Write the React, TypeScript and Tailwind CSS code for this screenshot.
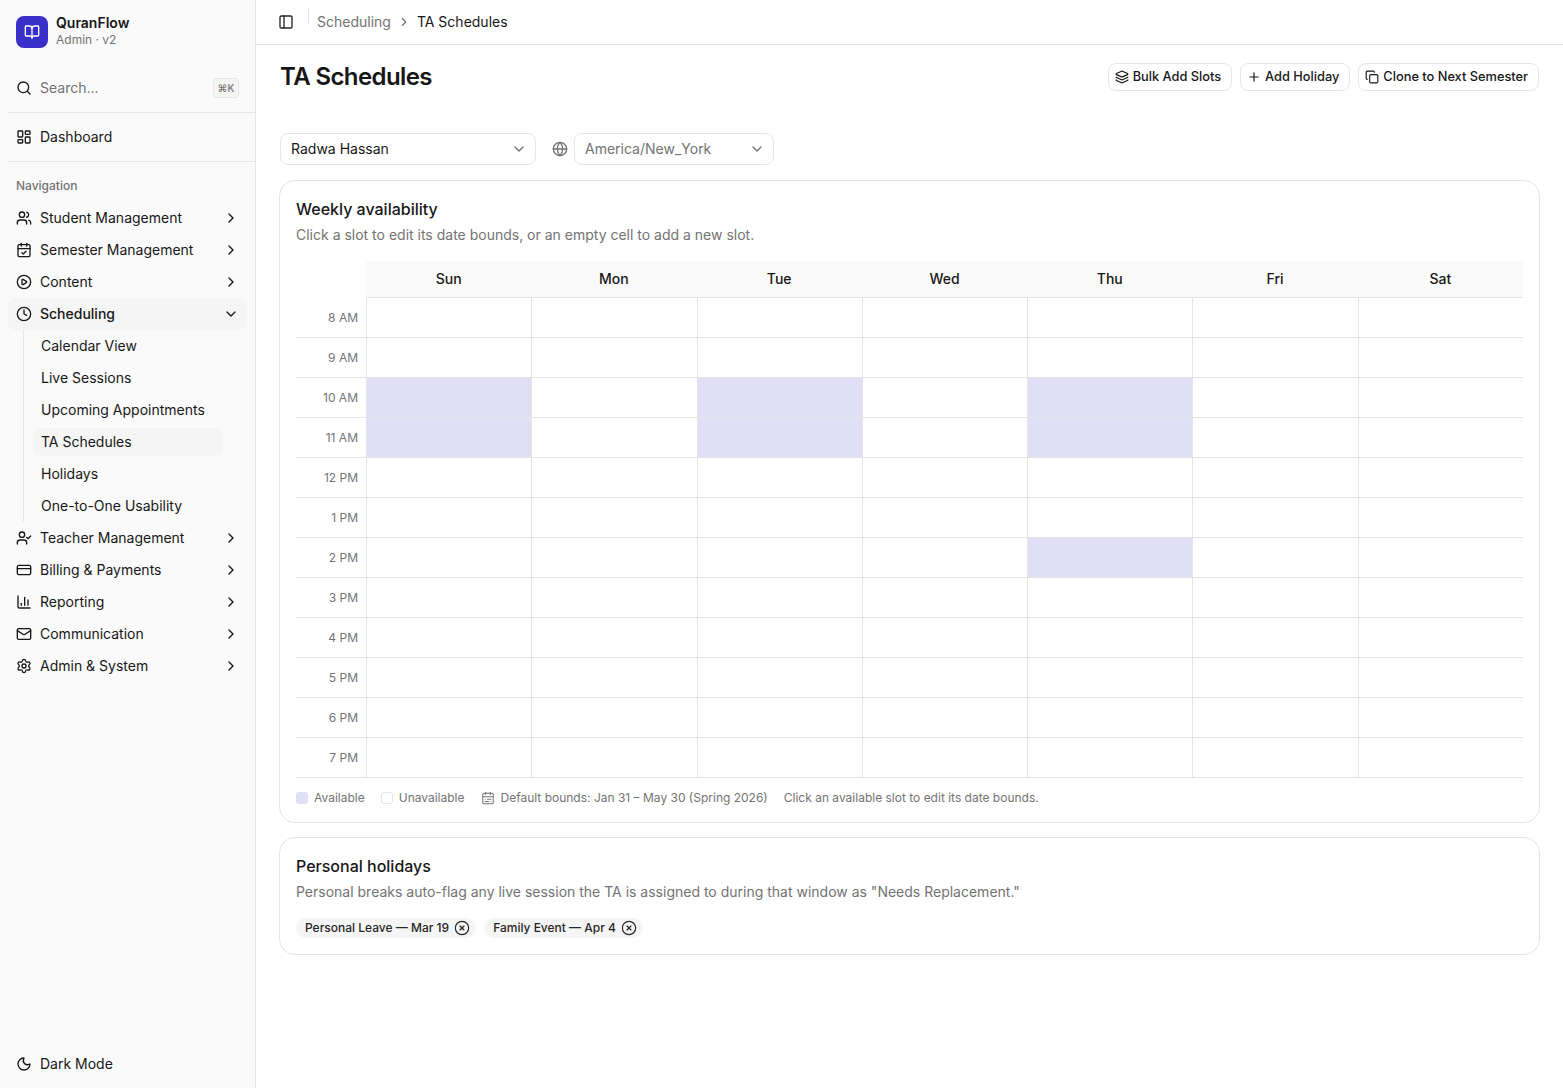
import React from 'react';
import {
  BookOpen,
  Search,
  LayoutDashboard,
  Users,
  CalendarCheck,
  CirclePlay,
  Clock,
  UserCheck,
  CreditCard,
  ChartColumn,
  Mail,
  Settings,
  Moon,
  PanelLeft,
  ChevronRight,
  ChevronDown,
  Layers,
  Plus,
  Copy,
  Globe,
  CalendarRange,
  CircleX,
} from 'lucide-react';

const DAYS = ['Sun', 'Mon', 'Tue', 'Wed', 'Thu', 'Fri', 'Sat'];
const HOURS = ['8 AM', '9 AM', '10 AM', '11 AM', '12 PM', '1 PM', '2 PM', '3 PM', '4 PM', '5 PM', '6 PM', '7 PM'];

// "day-hour" keys for the filled cells
const AVAILABLE = new Set(['0-2', '0-3', '2-2', '2-3', '4-2', '4-3', '4-6']);

const TOP_ITEMS = [
  { label: 'Student Management', icon: Users },
  { label: 'Semester Management', icon: CalendarCheck },
  { label: 'Content', icon: CirclePlay },
];

const BOTTOM_ITEMS = [
  { label: 'Teacher Management', icon: UserCheck },
  { label: 'Billing & Payments', icon: CreditCard },
  { label: 'Reporting', icon: ChartColumn },
  { label: 'Communication', icon: Mail },
  { label: 'Admin & System', icon: Settings },
];

const SCHEDULING_LINKS = ['Calendar View', 'Live Sessions', 'Upcoming Appointments', 'TA Schedules', 'Holidays', 'One-to-One Usability'];

const NavItem: React.FC<{ label: string; icon: React.ElementType }> = ({ label, icon: Icon }) => (
  <div className="flex h-8 items-center gap-2 px-2 text-[14px] leading-[20px] text-[#171717]">
    <Icon className="h-4 w-4 shrink-0" strokeWidth={2} />
    <span className="flex-1">{label}</span>
    <ChevronRight className="h-4 w-4 shrink-0" strokeWidth={2} />
  </div>
);

const Sidebar: React.FC = () => (
  <aside className="flex h-[1088px] w-[256px] shrink-0 flex-col border-r border-[#e5e5e5] bg-[#fafafa]">
    <div className="flex items-center gap-2 p-4">
      <div className="flex h-8 w-8 items-center justify-center rounded-lg bg-[#3b2fc9]">
        <BookOpen className="h-4 w-4 text-white" strokeWidth={2} />
      </div>
      <div className="flex flex-col">
        <span className="text-[14px] leading-[14px] font-semibold text-[#171717]">QuranFlow</span>
        <span className="mt-[2px] text-[12px] leading-[16px] text-[#737373]">Admin · v2</span>
      </div>
    </div>

    <div className="ml-2 flex h-[49px] items-center gap-2 border-b border-[#e5e5e5] pr-[16px] pl-2">
      <Search className="h-4 w-4 shrink-0 text-[#171717]" strokeWidth={2} />
      <span className="flex-1 text-[14px] leading-[20px] text-[#737373]">Search...</span>
      <span className="flex h-5 w-[26px] items-center justify-center rounded border border-[#e5e5e5] bg-[#f5f5f5] text-[10px] font-medium text-[#737373]">⌘K</span>
    </div>

    <div className="ml-2 flex h-[49px] items-center gap-2 border-b border-[#e5e5e5] pl-2 text-[14px] leading-[20px] text-[#171717]">
      <LayoutDashboard className="h-4 w-4" strokeWidth={2} />
      <span>Dashboard</span>
    </div>

    <div className="flex flex-1 flex-col p-2">
      <div className="flex h-8 items-center px-2 text-[12px] leading-[16px] font-medium text-[#737373]">Navigation</div>
      {TOP_ITEMS.map(item => (
        <NavItem key={item.label} {...item} />
      ))}
      <div className="flex h-8 items-center gap-2 rounded-lg bg-[#f5f5f5] px-2 text-[14px] leading-[20px] font-medium text-[#171717]">
        <Clock className="h-4 w-4 shrink-0" strokeWidth={2} />
        <span className="flex-1">Scheduling</span>
        <ChevronDown className="h-4 w-4 shrink-0" strokeWidth={2} />
      </div>
      <div className="mr-6 ml-[15px] flex flex-col gap-1 border-l border-[#e5e5e5] py-0.5 pl-[9px]">
        {SCHEDULING_LINKS.map(link => (
          <div
            key={link}
            className={`flex h-7 items-center rounded-md px-2 text-[14px] leading-[20px] text-[#171717] ${link === 'TA Schedules' ? 'bg-[#f5f5f5]' : ''}`}
          >
            {link}
          </div>
        ))}
      </div>
      {BOTTOM_ITEMS.map(item => (
        <NavItem key={item.label} {...item} />
      ))}
      <div className="mt-auto flex h-8 items-center gap-2 px-2 text-[14px] leading-[20px] text-[#171717]">
        <Moon className="h-4 w-4" strokeWidth={2} />
        <span>Dark Mode</span>
      </div>
    </div>
  </aside>
);

const ActionButton: React.FC<{ label: string; icon: React.ElementType }> = ({ label, icon: Icon }) => (
  <button className="flex h-7 items-center gap-1 rounded-lg border border-[#e5e5e5] bg-white pr-[10px] pl-[6px] text-[12.8px] font-medium text-[#171717]">
    <Icon className="h-[14px] w-[14px]" strokeWidth={2} />
    {label}
  </button>
);

const AvailabilityGrid: React.FC = () => (
  <div className="mt-4 grid grid-cols-[70px_repeat(7,1fr)]">
    <div className="h-[37px]" />
    {DAYS.map(day => (
      <div key={day} className="flex h-[37px] items-center justify-center border-b border-[#e5e5e5] bg-[#fafafa] text-[14px] leading-[20px] font-medium text-[#171717]">
        {day}
      </div>
    ))}
    {HOURS.map((hour, h) => (
      <React.Fragment key={hour}>
        <div className="flex h-10 items-center justify-end border-b border-[#e5e5e5] pr-2 text-[12px] text-[#737373]">{hour}</div>
        {DAYS.map((day, d) => (
          <div
            key={day}
            className={`h-10 border-b border-l border-[#e5e5e5] ${AVAILABLE.has(`${d}-${h}`) ? 'bg-[#e0dff6]' : 'bg-white'}`}
          />
        ))}
      </React.Fragment>
    ))}
  </div>
);

const Legend: React.FC = () => (
  <div className="mt-3 flex h-[16px] items-center text-[12px] text-[#737373]">
    <span className="h-3 w-3 rounded-[3px] bg-[#e0dff6]" />
    <span className="ml-1.5">Available</span>
    <span className="ml-4 h-3 w-3 rounded-[3px] border border-[#e5e5e5] bg-white" />
    <span className="ml-1.5">Unavailable</span>
    <CalendarRange className="ml-4 h-[14px] w-[14px]" strokeWidth={1.75} />
    <span className="ml-1.5">Default bounds: Jan 31 – May 30 (Spring 2026)</span>
    <span className="ml-4">Click an available slot to edit its date bounds.</span>
  </div>
);

const HolidayChip: React.FC<{ label: string }> = ({ label }) => (
  <span className="flex h-5 items-center gap-[5px] rounded-full bg-[#f5f5f5] pr-[6px] pl-[9px] text-[12px] font-medium text-[#262626]">
    {label}
    <CircleX className="h-4 w-4" strokeWidth={1.75} />
  </span>
);

const App: React.FC = () => (
  <div className="flex h-[1088px] overflow-hidden bg-white font-['Inter',sans-serif]">
    <Sidebar />
    <main className="flex min-w-0 flex-1 flex-col">
      <header className="flex h-[45px] items-center border-b border-[#e5e5e5] pl-[22px] text-[14px] leading-[20px]">
        <PanelLeft className="h-4 w-4 text-[#262626]" strokeWidth={2} />
        <span className="mr-2 ml-[14px] h-4 -translate-y-[6px] border-l border-[#e5e5e5]" />
        <span className="text-[#737373]">Scheduling</span>
        <ChevronRight className="mx-[6px] h-[14px] w-[14px] text-[#737373]" strokeWidth={2} />
        <span className="text-[#171717]">TA Schedules</span>
      </header>

      <div className="flex flex-col px-6 pt-[18px]">
        <div className="flex items-start justify-between">
          <h1 className="text-[24px] leading-[28px] font-semibold tracking-[-0.6px] text-[#171717]">TA Schedules</h1>
          <div className="flex gap-2">
            <ActionButton label="Bulk Add Slots" icon={Layers} />
            <ActionButton label="Add Holiday" icon={Plus} />
            <ActionButton label="Clone to Next Semester" icon={Copy} />
          </div>
        </div>

        <div className="mt-[42px] flex items-center">
          <div className="flex h-8 w-[256px] items-center justify-between rounded-lg border border-[#e5e5e5] bg-white pr-2 pl-[10px] text-[14px] leading-[20px] text-[#171717]">
            Radwa Hassan
            <ChevronDown className="h-4 w-4 text-[#737373]" strokeWidth={2} />
          </div>
          <Globe className="ml-[16px] h-4 w-4 text-[#737373]" strokeWidth={2} />
          <div className="ml-[6px] flex h-8 w-[200px] items-center justify-between rounded-lg border border-[#e5e5e5] bg-white pr-2 pl-[10px] text-[14px] leading-[20px] text-[#737373]">
            America/New_York
            <ChevronDown className="h-4 w-4" strokeWidth={2} />
          </div>
        </div>

        <section className="-mx-px mt-[15px] rounded-2xl border border-[#e5e5e5] bg-white px-4 pt-[17px] pb-4">
          <h2 className="text-[16px] leading-[22px] font-medium text-[#171717]">Weekly availability</h2>
          <p className="mt-[5px] text-[14px] leading-[20px] text-[#737373]">Click a slot to edit its date bounds, or an empty cell to add a new slot.</p>
          <AvailabilityGrid />
          <Legend />
        </section>

        <section className="-mx-px mt-[14px] rounded-2xl border border-[#e5e5e5] bg-white px-4 pt-[17px] pb-4">
          <h2 className="text-[16px] leading-[22px] font-medium text-[#171717]">Personal holidays</h2>
          <p className="mt-[5px] text-[14px] leading-[20px] text-[#737373]">Personal breaks auto-flag any live session the TA is assigned to during that window as "Needs Replacement."</p>
          <div className="mt-4 flex gap-2">
            <HolidayChip label="Personal Leave — Mar 19" />
            <HolidayChip label="Family Event — Apr 4" />
          </div>
        </section>
      </div>
    </main>
  </div>
);

export default App;
